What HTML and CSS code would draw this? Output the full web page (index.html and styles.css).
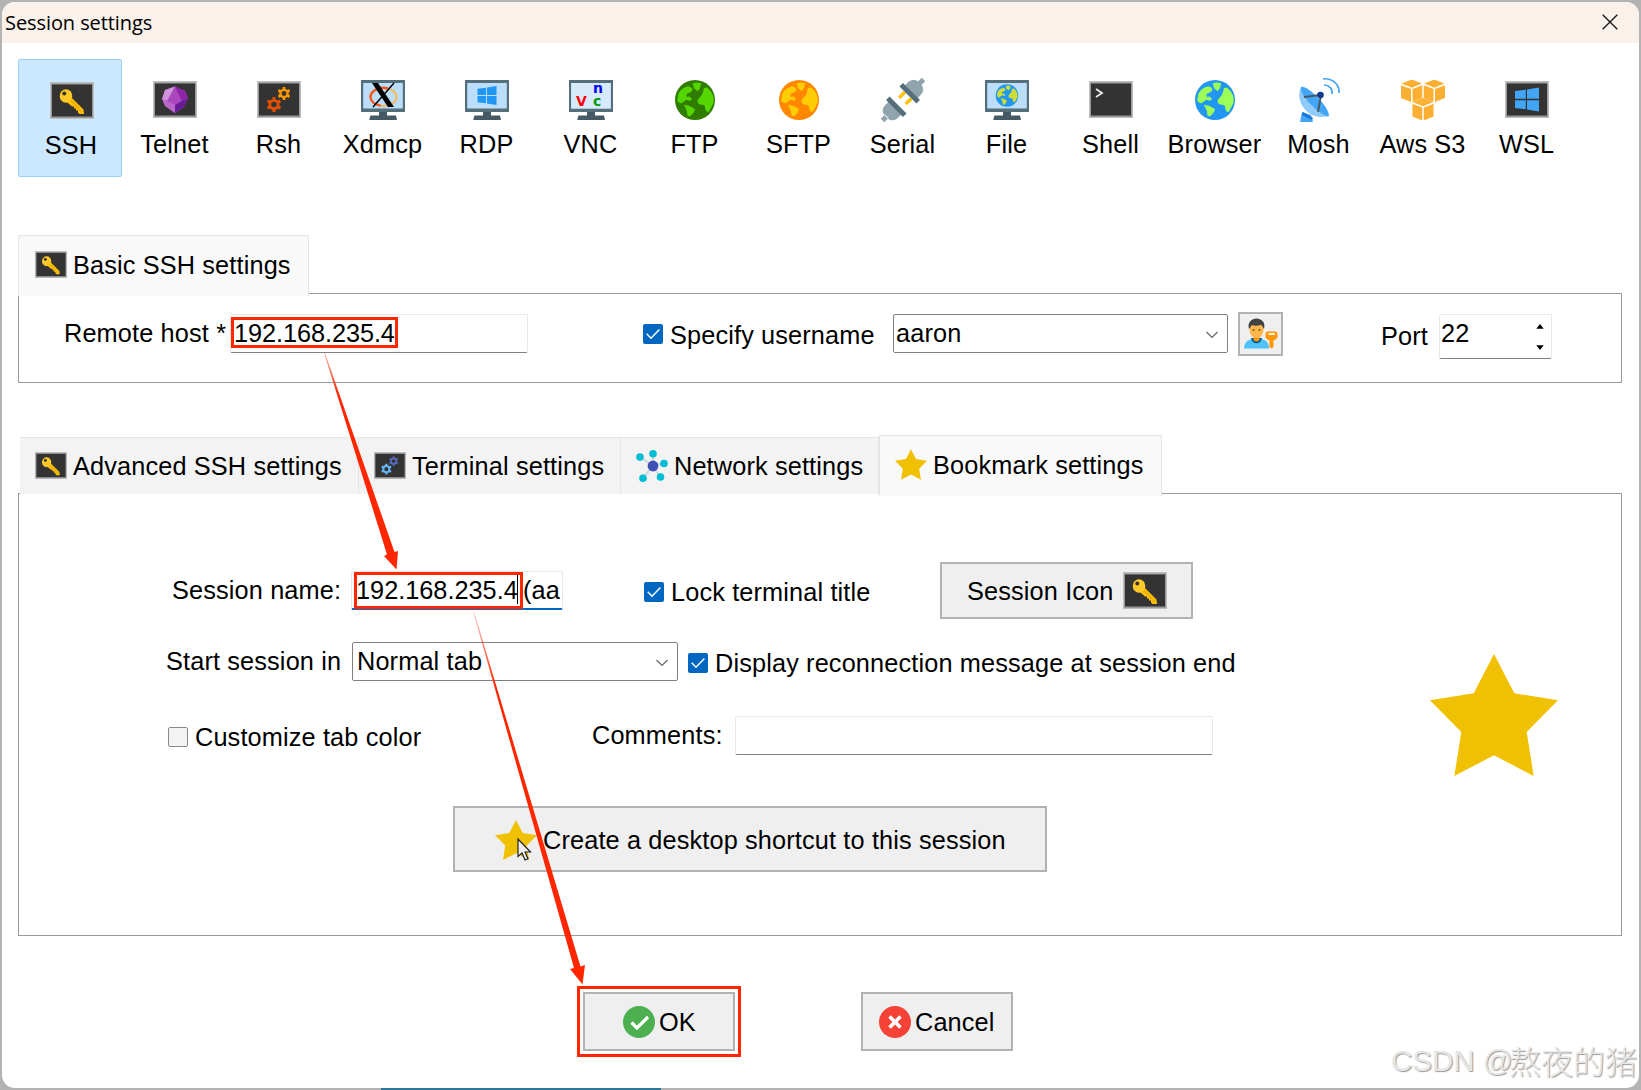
FILE: index.html
```html
<!DOCTYPE html>
<html lang="en">
<head>
<meta charset="utf-8">
<title>Session settings</title>
<link rel="stylesheet" href="styles.css">
</head>
<body>
<svg class="defs" width="0" height="0">
  <symbol id="term" viewBox="0 0 44 37"><rect width="44" height="37" fill="#bdbdbd"/><rect x="1" y="1.5" width="42" height="34.5" fill="#999"/><rect x="2" y="2.5" width="40" height="32" fill="#333"/></symbol>
  <symbol id="key" viewBox="0 0 44 37"><use href="#term"/><path d="M20.500 14.500 33.500 27.500 34 32H29.500L28 30.500V28.500H26V26.500H24V24.500H22L15 18.500z" fill="#ffc107"/><path d="M20 17 32 30" stroke="#eeb000" stroke-width="2"/><ellipse cx="16" cy="14" rx="6.300" ry="6.800" fill="#ffca28"/><circle cx="14.300" cy="11.500" r="2" fill="#333"/></symbol>
  <symbol id="monitor" viewBox="0 0 44 44"><path d="M0 2h44v32H0z" fill="#546e7a"/><path d="M2.200 5h39.600v25.500H2.200z" fill="#bbdefb"/><path d="M18 34h8v4h-8z" fill="#455a64"/><path d="M9.500 37.500h25.500l1 4.500H8.200z" fill="#455a64"/></symbol>
  <symbol id="land" viewBox="0 0 44 44"><path d="M5 17.700Q6 11 15.300 8.300L19 10Q20 13 17.200 14.300L13.500 16Q13 19 15.300 19.300L16 18 19 21 17.200 22.700 13.500 21.700 9.800 24.300Q8 27 4.200 22.700zM19.800 5.300 24 4.500 28.300 5.300 27 10 24.600 13.300 20.900 10zM30.900 10 34 9.500Q42 16 40.500 25L35.700 34Q32 34 32 28L30 26.700Q24 27 24.600 22L28.300 17.700 30 14.300zM10.900 26.700 16 27.700 22 31 20.900 34.300 17.200 38.300 14.600 37.700 13.800 32.700z"/></symbol>
  <symbol id="gear" viewBox="-10 -10 20 20"><circle r="5.200" fill="none" stroke="currentColor" stroke-width="3.400"/><path d="M0-9.300V-6M0 9.300V6M8-4.650 5.200-3M-8-4.650-5.200-3M8 4.650 5.200 3M-8 4.650-5.200 3" stroke="currentColor" stroke-width="3.800"/></symbol>
  <symbol id="gears" viewBox="0 0 44 37"><use class="gear-a" href="#gear" x="20" y="5.500" width="14" height="14"/><use class="gear-b" href="#gear" x="9" y="15.500" width="16" height="16"/></symbol>
  <symbol id="win" viewBox="0 0 20 20"><path d="M0 3 9 1.800V9.400H0zM10 1.600 20 0V9.400H10zM0 10.600H9V18.200L0 17zM10 10.600H20V20L10 18.400z"/></symbol>
  <symbol id="star" viewBox="0 0 128 122"><path d="M64 0 84.300 39.300 128 46.300 96.700 78 103.700 122 64 101.300 24.300 122 31.300 78 0 46.300 43.700 39.300z" fill="#f0c102"/></symbol>
  <symbol id="tick" viewBox="0 0 20 20"><rect width="20" height="20" rx="2" fill="#0067c0"/><path d="M3.700 9.800 8 14.200 16.400 5.600" fill="none" stroke="#fff" stroke-width="1.500"/></symbol>
  <symbol id="chev" viewBox="0 0 12 8"><path d="M.5 1 6 6.500 11.500 1" fill="none" stroke="#666" stroke-width="1.200"/></symbol>
  <symbol id="box" viewBox="0 0 20 22" preserveAspectRatio="none"><path d="M10 0 19.500 4 10 8 .5 4zM0 5.500 9.300 9.400V22L0 18zM20 5.500 10.700 9.400V22L20 18z" fill="#fbb034"/></symbol>
</svg>

<div class="window">
  <header class="titlebar">
    <h1 class="title">Session settings</h1>
    <svg class="close" viewBox="0 0 16 16"><path d="M.7.700 15.300 15.300M15.300.700.7 15.300" stroke="#111" stroke-width="1.300"/></svg>
  </header>

  <nav class="toolbar">
    <div class="tool selected"><svg class="ico" viewBox="0 0 44 44"><use href="#key" y="3" width="44" height="37"/></svg><span>SSH</span></div>
    <div class="tool"><svg class="ico" viewBox="0 0 44 44"><use href="#term" y="3" width="44" height="37"/><path d="M22 8.500 32 13 35 20 31 29 22 35 12 28 9 21 12 12z" fill="#ab47bc"/><path d="M22 8.500 12 12 9 21 14 23z" fill="#ce93d8"/><path d="M22 8.500 32 13 35 20 29 23z" fill="#8e24aa"/><path d="M22 27 29 23 35 20 31 29 22 35z" fill="#6a1b9a"/><path d="M9 21 14 23 22 27V35L12 28z" fill="#ba68c8"/></svg><span>Telnet</span></div>
    <div class="tool"><svg class="ico" viewBox="0 0 44 44"><use href="#term" y="3" width="44" height="37"/><use href="#gears" y="3" width="44" height="37"/></svg><span>Rsh</span></div>
    <div class="tool"><svg class="ico" viewBox="0 0 44 44"><use href="#monitor" width="44" height="44"/><ellipse cx="22.500" cy="19" rx="13" ry="9" fill="none" stroke="#f9b85a" stroke-width="2"/><path d="M27 10.300C16 8 9.500 14 9.500 19c0 4 4 7.500 10 8.700" fill="none" stroke="#f4511e" stroke-width="2.300"/><path d="M11 5h6l16 24h-6z"/><path d="M33 5 12 29" stroke="#000" stroke-width="1.500"/></svg><span>Xdmcp</span></div>
    <div class="tool"><svg class="ico" viewBox="0 0 44 44"><use href="#monitor" width="44" height="44"/><use href="#win" x="12" y="8" width="20" height="19" fill="#2196f3"/></svg><span>RDP</span></div>
    <div class="tool"><svg class="ico" viewBox="0 0 44 44"><use href="#monitor" width="44" height="44"/><path d="M2.200 5h39.600v25.500H2.200z" fill="#d6eafc"/><text class="vnc" x="7" y="28" fill="#f00">V</text><text class="vnc" x="24" y="14.500" fill="#00f">n</text><text class="vnc" x="24" y="28" fill="#009a10">c</text></svg><span>VNC</span></div>
    <div class="tool"><svg class="ico" viewBox="0 0 44 44"><circle cx="22" cy="22" r="20" fill="#2e7d00"/><use href="#land" fill="#56d600" width="44" height="44"/></svg><span>FTP</span></div>
    <div class="tool"><svg class="ico" viewBox="0 0 44 44"><circle cx="22" cy="22" r="20" fill="#ff8800"/><use href="#land" fill="#ffcd05" width="44" height="44"/></svg><span>SFTP</span></div>
    <div class="tool"><svg class="ico" viewBox="0 0 44 44"><g transform="translate(22 22) rotate(45)"><path d="M-2.500-29h5v6h-5zM-9-10v-6q0-8 9-8t9 8v6zM-9 11v5q0 8 9 8t9-8v-5zM-2.500 23h5v6h-5z" fill="#90a4ae"/><path d="M-6-7h3.500v8H-6zM3-7h3.500v8H3z" fill="#ffc107"/><path d="M-12-12h24v5h-24zM-12 7h24v5h-24z" fill="#546e7a"/></g></svg><span>Serial</span></div>
    <div class="tool"><svg class="ico" viewBox="0 0 44 44"><use href="#monitor" width="44" height="44"/><circle cx="22" cy="17.500" r="11.300" fill="#2196f3"/><use href="#land" x="9.500" y="5" width="25" height="25" fill="#cddc39"/></svg><span>File</span></div>
    <div class="tool"><svg class="ico" viewBox="0 0 44 44"><use href="#term" y="3" width="44" height="37"/><path d="M7 11 13 15 7 19" fill="none" stroke="#eee" stroke-width="1.800"/></svg><span>Shell</span></div>
    <div class="tool"><svg class="ico" viewBox="0 0 44 44"><circle cx="22" cy="22" r="20" fill="#2196f3"/><use href="#land" fill="#9cff57" width="44" height="44"/></svg><span>Browser</span></div>
    <div class="tool"><svg class="ico" viewBox="0 0 44 44"><path d="M5 34 14 37 16 44H3z" fill="#42a5f5"/><path d="M6 34 16 40 15 42 5 37z" fill="#1976d2"/><path d="M4 9C-3 24 12 44 32 38z" fill="#90caf9"/><path d="M4 9C10 7 32 28 32 38 26 40 2 18 4 9z" fill="#42a5f5"/><path d="M7 19 24 17 21 34" fill="none" stroke="#455a64" stroke-width="2"/><circle cx="23.500" cy="17" r="3.300" fill="#0d3c8c"/><path d="M27 7c5 0 9 4 8 9M26 .8C36 0 43 7 42 15" fill="none" stroke="#42a5f5" stroke-width="1.700"/></svg><span>Mosh</span></div>
    <div class="tool"><svg class="ico" viewBox="0 0 44 44"><use href="#box" x="0" y="1.500" width="21.500" height="22.500"/><use href="#box" x="22.500" y="1.500" width="21.500" height="22.500"/><use href="#box" x="11.250" y="20" width="21.500" height="22.500"/></svg><span>Aws S3</span></div>
    <div class="tool"><svg class="ico" viewBox="0 0 44 44"><use href="#term" y="3" width="44" height="37"/><use href="#win" x="10" y="9" width="24" height="25" fill="#42a5f5"/></svg><span>WSL</span></div>
  </nav>

  <section class="basic">
    <div class="tab active first"><svg class="tabico"><use href="#key" width="32" height="27"/></svg><span>Basic SSH settings</span></div>
    <div class="panel basic-panel">
      <span class="lbl host-lbl">Remote host *</span>
      <div class="field host"><span class="mark">192.168.235.4</span></div>
      <svg class="check user-check"><use href="#tick" width="20" height="20"/></svg>
      <span class="lbl user-lbl">Specify username</span>
      <div class="combo user"><span>aaron</span><svg class="chev"><use href="#chev" width="12" height="8"/></svg></div>
      <div class="userbtn"><svg viewBox="0 0 34 34" width="34" height="34"><path d="M0 31.500C0 25 4 23 8 22h9c5 1 8 3 8 9.500z" fill="#4fc3f7"/><path d="M7 21h11c-1 7-10 7-11 0z" fill="#01579b"/><path d="M9.500 17h6v6q-3 3-6 0z" fill="#ff9800"/><path d="M5.500 10q0-6 7-6t7 6v3q-1 8-7 8t-7-8z" fill="#ffb74d"/><circle cx="9.500" cy="13" r=".9" fill="#784719"/><circle cx="15.500" cy="13" r=".9" fill="#784719"/><path d="M5 12C3 5 8 1.500 12.500 1.500S22 5 20 12L17.500 8Q11 9.500 8 8z" fill="#424242"/><path d="M23 14.500h9l1.500 2v4L31 23h-1.500v7l-2 1.500-2-1.500v-7H24l-2.500-2.500v-4z" fill="#ff9800"/><path d="M24.500 16h6.500v2h-6.500z" fill="#fff3e0"/></svg></div>
      <span class="lbl port-lbl">Port</span>
      <div class="field port"><span>22</span><svg class="spin" viewBox="0 0 8 28"><path d="M0 5 4 0 8 5zM0 23 4 28 8 23z"/></svg></div>
    </div>
  </section>

  <section class="advanced">
    <div class="tabs">
      <div class="tab t1"><svg class="tabico"><use href="#key" width="32" height="27"/></svg><span>Advanced SSH settings</span></div>
      <div class="tab t2"><svg class="tabico blue"><use href="#term" width="32" height="27"/><use href="#gears" width="32" height="27"/></svg><span>Terminal settings</span></div>
      <div class="tab t3"><svg class="netico" viewBox="0 0 32 32"><path d="M17 16 4 7M17 16V4M17 16 28 13M17 16 24 27M17 16 7 28" stroke="#cfd8dc" stroke-width="2"/><g fill="#00bcd4"><circle cx="4" cy="7" r="3.800"/><circle cx="17" cy="3.800" r="3.800"/><circle cx="28" cy="13.500" r="3.800"/><circle cx="24.500" cy="27" r="3.800"/><circle cx="7" cy="28.200" r="3.800"/></g><circle cx="17" cy="16" r="5.400" fill="#3f51b5"/></svg><span>Network settings</span></div>
      <div class="tab active t4"><svg class="starico"><use href="#star" width="32" height="31"/></svg><span>Bookmark settings</span></div>
    </div>
    <div class="panel adv-panel">
      <div class="rows">
        <div class="row r1">
          <span class="lbl">Session name:</span>
          <div class="field name"><span class="mark">192.168.235.4<i class="caret"></i></span><span class="rest">(aa</span></div>
          <svg class="check"><use href="#tick" width="20" height="20"/></svg>
          <span class="lbl lock">Lock terminal title</span>
          <div class="btn iconbtn"><span>Session Icon</span><svg width="44" height="37"><use href="#key" width="44" height="37"/></svg></div>
        </div>
        <div class="row r2">
          <span class="lbl">Start session in</span>
          <div class="combo start"><span>Normal tab</span><svg class="chev"><use href="#chev" width="12" height="8"/></svg></div>
          <svg class="check"><use href="#tick" width="20" height="20"/></svg>
          <span class="lbl disp">Display reconnection message at session end</span>
        </div>
        <div class="row r3">
          <i class="check empty"></i>
          <span class="lbl cust">Customize tab color</span>
          <span class="lbl">Comments:</span>
          <div class="field comments"></div>
        </div>
        <div class="btn shortcut"><svg width="42" height="42"><use href="#star" width="42" height="42"/></svg><span>Create a desktop shortcut to this session</span></div>
      </div>
      <svg class="bigstar" width="128" height="122"><use href="#star" width="128" height="122"/></svg>
    </div>
  </section>

  <footer class="actions">
    <div class="okmark"><div class="btn act"><svg width="32" height="32" viewBox="0 0 32 32"><circle cx="16" cy="16" r="16" fill="#4caf50"/><path d="M8.500 16.500 14 22 25 11" fill="none" stroke="#fff" stroke-width="3.200"/></svg><span>OK</span></div></div>
    <div class="btn act cancel"><svg width="32" height="32" viewBox="0 0 32 32"><circle cx="16" cy="16" r="16" fill="#f44336"/><path d="M10.500 10.500 21.500 21.500M21.500 10.500 10.500 21.500" stroke="#fff" stroke-width="3.600"/></svg><span>Cancel</span></div>
  </footer>
</div>

<i class="under-teal"></i>
<svg class="overlay" viewBox="0 0 1641 1090">
  <defs>
    <linearGradient id="fade1" gradientUnits="userSpaceOnUse" x1="325" y1="353" x2="338" y2="395"><stop offset="0" stop-color="#ff2600" stop-opacity=".35"/><stop offset="1" stop-color="#ff2600"/></linearGradient>
    <linearGradient id="fade2" gradientUnits="userSpaceOnUse" x1="474" y1="613" x2="495" y2="690"><stop offset="0" stop-color="#ff2600" stop-opacity=".25"/><stop offset="1" stop-color="#ff2600"/></linearGradient>
  </defs>
  <path d="M324 353H325L394.500 552 398 551 396.500 569.500 384 556 387 554.500z" fill="url(#fade1)"/>
  <path d="M473.500 613H474.500L580.500 966.500 585 965 582.500 984.500 570 969 574 968z" fill="url(#fade2)"/>
  <path d="M518 839v17.500l4-3.500 3 7 3-1.300-3-6.700h5.500z" fill="#eee" stroke="#222" stroke-width="1.200"/>
</svg>
<div class="watermark"><span>CSDN @</span>熬夜的猪</div>
</body>
</html>
```
FILE: styles.css
```css
* { box-sizing: border-box; }
body {
  margin: 0; padding: 2px; width: 1641px; height: 1090px; overflow: hidden;
  background: #b3b3b3; color: #000; letter-spacing: .14px;
  font: 25.3px/30px "Liberation Sans", Arial, sans-serif; white-space: nowrap;
}
.defs { position: absolute; }
svg { display: block; flex: none; overflow: visible; }
i { font-style: normal; display: block; }
.window { height: 1086px; background: #fff; border-radius: 13px; overflow: hidden; }
.titlebar {
  height: 41px; background: #f9f1ea; display: flex; align-items: center;
  justify-content: space-between; padding: 0 21px 0 3px;
}
.title { margin: 0; font: 400 20px/28px "Open Sans", "Noto Sans", sans-serif; letter-spacing: -.08px; }
.close { width: 16px; height: 16px; margin-top: -2px; }

.toolbar { display: flex; height: 118px; margin: 16px 0 0 16px; }
.tool {
  width: 104px; height: 118px; padding: 19px 0 0 1px; display: flex; flex-direction: column;
  align-items: center; gap: 7px; border: 0 solid #99d1ff;
}
.selected { background: #cce8ff; border-width: 1px; border-radius: 2px; padding-left: 2px; }
.selected .ico { margin-left: 2px; }
.ico { width: 44px; height: 44px; }
.vnc { font: 700 14px "DejaVu Sans", sans-serif; letter-spacing: 0; }
.gear-a { color: var(--a, #ff9800); }
.gear-b { color: var(--b, #e65100); }
.blue { --a: #5c6bc0; --b: #64b5f6; }

.tab {
  display: flex; gap: 6px; background: #f3f3f3; border: 1px solid #e5e5e5;
  border-width: 1px 1px 0 0; height: 57px; padding: 13px 0 0 15px;
}
.tab.active { background: #f9f9f9; border-left-width: 1px; height: 61px; position: relative; z-index: 1; }
.tabico { width: 32px; height: 27px; margin-top: 1px; }
.panel { border: 1px solid #999; width: 1604px; margin-left: 16px; }

.basic { margin-top: 58px; }
.first { width: 291px; margin-left: 16px; padding: 14px 0 0 16px; }
.basic-panel { height: 90px; margin-top: -3px; display: flex; align-items: flex-start; padding: 20px 0 0 45px; }
.lbl { flex: none; }
.host-lbl { width: 166px; margin-top: 4px; }
.user-lbl { width: 223px; margin-top: 6px; }
.port-lbl { width: 58px; margin: 7px 0 0 98px; }
.field {
  flex: none; display: flex; height: 39px; background: #fff; border: 1px solid #e8e8e8;
  border-bottom-color: #808080; border-radius: 2px;
}
.host { width: 298px; margin-right: 115px; }
.mark { border: 3px solid #ff2600; flex: none; letter-spacing: 0; }
.host .mark { height: 31px; width: 167px; margin-top: 2px; line-height: 26px; letter-spacing: -.07px; }
.check { width: 20px; height: 20px; flex: none; margin: 10px 7px 0 0; }
.combo {
  flex: none; display: flex; height: 39px; border: 1px solid #808080; border-radius: 2px;
  background: #fff; justify-content: space-between; padding: 3px 9px 0 2px;
}
.user { width: 335px; margin-right: 10px; }
.chev { width: 12px; height: 8px; margin-top: 13px; }
.userbtn { width: 45px; height: 44px; margin-top: -2px; border: 2px solid #b2b2b2; background: #efefef; padding: 3px 4px; }
.port { width: 113px; height: 45px; padding: 3px 7px 0 1px; justify-content: space-between; }
.spin { width: 8px; height: 26px; margin-top: 6px; }

.advanced { margin-top: 52px; }
.tabs { display: flex; height: 61px; margin-left: 18px; align-items: flex-start; }
.tabs .tab { margin-top: 2px; }
.tabs .t4 { margin-top: 0; width: 283px; padding: 14px 0 0 15px; }
.t1 { width: 339px; }
.t2 { width: 262px; }
.t3 { width: 258px; }
.netico { width: 32px; height: 32px; margin-top: -1px; }
.starico { width: 32px; height: 31px; margin-top: -1px; }
.adv-panel { height: 443px; margin-top: -3px; display: flex; }
.rows { width: 1411px; }
.bigstar { margin-top: 160px; }
.row { display: flex; height: 71px; align-items: flex-start; }
.r1 { margin-top: 77px; padding-left: 153px; }
.r1 .lbl { width: 179px; margin-top: 4px; }
.name { width: 212px; margin-right: 81px; border-bottom: 2px solid #0067c0; }
.name .mark { position: relative; width: 169px; height: 37px; margin: 0 0 0 2px; padding-top: 1px; line-height: 28px; text-indent: -1px; }
.caret { position: absolute; left: 160px; top: 0; width: 1px; height: 29px; background: #000; }
.name .rest { line-height: 36px; }
.r1 .check { margin-top: 11px; }
.r1 .lock { width: 269px; margin-top: 6px; }
.btn {
  flex: none; display: flex; align-items: center; border: 2px solid #b2b2b2; background: #efefef;
}
.iconbtn { width: 253px; height: 57px; margin-top: -9px; padding-left: 25px; gap: 9px; }
.r2 { padding-left: 147px; height: 74px; }
.r2 .lbl { width: 186px; margin-top: 4px; }
.start { width: 326px; margin-right: 10px; padding-left: 4px; }
.r2 .check { margin-top: 11px; }
.r2 .disp { margin-top: 6px; }
.r3 { padding-left: 149px; height: 90px; }
.check.empty { border: 1px solid #8a8a8a; border-radius: 2px; background: #f3f3f3; margin-top: 11px; }
.r3 .cust { width: 397px; margin-top: 6px; }
.r3 .lbl:nth-child(3) { width: 143px; margin-top: 4px; }
.comments { width: 478px; }
.shortcut { width: 594px; height: 66px; margin-left: 434px; padding: 1px 0 0 40px; gap: 6px; }

.actions { display: flex; margin: 50px 0 0 575px; }
.okmark { border: 3px solid #ff2600; padding: 3px; width: 164px; height: 71px; }
.act { width: 152px; height: 59px; padding-left: 38px; gap: 4px; }
.cancel { margin: 6px 0 0 120px; padding-left: 16px; }
.under-teal { position: absolute; left: 381px; top: 1088px; width: 280px; height: 2px; background: #2d7896; }
.overlay { position: absolute; left: 0; top: 0; width: 1641px; height: 1090px; pointer-events: none; }
.watermark {
  position: absolute; left: 1391px; top: 1038px; display: flex; font: 300 32px/44px "Noto Sans CJK SC", sans-serif;
  letter-spacing: 0; color: #e6e6e6; text-shadow: 1px 1px 1px #999;
}
.watermark span { width: 118px; font: 29.5px/46px "Liberation Sans", sans-serif; }
```
